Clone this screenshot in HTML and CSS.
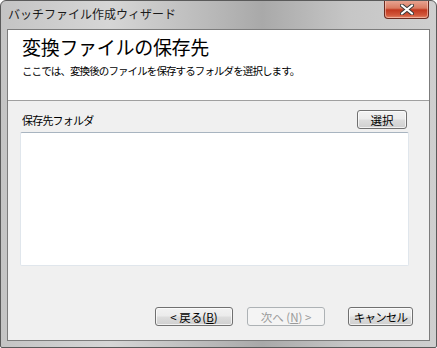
FILE: index.html
```html
<!DOCTYPE html>
<html lang="ja">
<head>
  <meta charset="UTF-8" />
  <title>バッチファイル作成ウィザード</title>
  <link rel="stylesheet" href="styles.css">
</head>
<body>
  <div class="window">
    <div class="titlebar">
      <span class="title">バッチファイル作成ウィザード</span>
      <button class="close" aria-label="閉じる">
        <svg width="14" height="11" viewBox="0 0 14 11">
          <path d="M2 1.5 L12 9.5 M12 1.5 L2 9.5" stroke="#3a3a3a" stroke-width="4" stroke-linecap="round"/>
          <path d="M2 1.5 L12 9.5 M12 1.5 L2 9.5" stroke="#ffffff" stroke-width="2.2" stroke-linecap="round"/>
        </svg>
      </button>
    </div>

    <div class="client">
      <div class="header">
        <h1>変換ファイルの保存先</h1>
        <p>ここでは、変換後のファイルを保存するフォルダを選択します。</p>
      </div>

      <div class="content">
        <div class="folder-row">
          <label for="folder">保存先フォルダ</label>
          <button class="btn btn-select">選択</button>
        </div>
        <textarea id="folder"></textarea>

        <div class="buttons">
          <button class="btn btn-nav">&lt; 戻る(<u>B</u>)</button>
          <button class="btn btn-nav" disabled>次へ (<u>N</u>) &gt;</button>
          <button class="btn btn-cancel">キャンセル</button>
        </div>
      </div>
    </div>
  </div>
</body>
</html>
```

FILE: styles.css
```css
html, body {
  margin: 0;
  padding: 0;
  background: #ffffff;
}
body {
  font-family: "Noto Sans CJK JP", "Noto Sans", sans-serif;
  font-size: 12px;
  color: #000;
}
.window {
  box-sizing: border-box;
  width: 437px;
  height: 348px;
  border: 1px solid #5a5a5a;
  border-radius: 6px 6px 2px 2px;
  padding: 0 6px 6px 6px;
  background: linear-gradient(to right, #c4c4c4 0%, #d6d6d6 25%, #bdbdbd 45%, #a9a9a9 60%, #c6c6c6 80%, #cfcfcf 100%);
  display: flex;
  flex-direction: column;
  overflow: hidden;
}
.titlebar {
  height: 28px;
  display: flex;
  align-items: flex-start;
  justify-content: space-between;
  flex-shrink: 0;
}
.title {
  margin: 5px 0 0 1px;
  font-size: 12px;
  line-height: 16px;
  color: #1a1a1a;
}
.close {
  width: 45px;
  height: 19px;
  margin-top: -1px;
  margin-right: 1px;
  padding: 0;
  border: 1px solid #6b2b20;
  border-top: none;
  border-radius: 0 0 4px 4px;
  background: linear-gradient(to bottom, #e9a897 0%, #da7c62 45%, #c1381f 55%, #d2583c 85%, #e38a6c 100%);
  box-shadow: inset 0 0 0 1px rgba(255, 220, 210, 0.5);
  display: flex;
  align-items: center;
  justify-content: center;
}
.client {
  flex: 1;
  border: 1px solid #7c7c7c;
  background: #f0f0f0;
  display: flex;
  flex-direction: column;
}
.header {
  height: 71px;
  background: #ffffff;
  border-bottom: 1px solid #a0a0a0;
  padding: 4px 14px 0 14px;
  box-sizing: border-box;
  flex-shrink: 0;
}
.header h1 {
  margin: 0;
  font-size: 19px;
  font-weight: normal;
  line-height: 26px;
  letter-spacing: -0.3px;
}
.header p {
  margin: 3px 0 0 0;
  font-size: 10.5px;
  line-height: 16px;
  letter-spacing: -0.9px;
}
.content {
  flex: 1;
  padding: 9px 20px 14px 12px;
  display: flex;
  flex-direction: column;
}
.folder-row {
  display: flex;
  align-items: center;
  justify-content: space-between;
  padding-left: 2px;
}
.folder-row label {
  font-size: 11px;
  letter-spacing: -0.8px;
}
textarea {
  margin-top: 3px;
  height: 134px;
  box-sizing: border-box;
  border: 1px solid #e0e6ec;
  border-top-color: #a8b4c0;
  border-radius: 2px;
  background: #ffffff;
  resize: none;
  width: 389px;
}
.btn {
  box-sizing: border-box;
  height: 19px;
  padding: 0;
  font-family: inherit;
  font-size: 11.5px;
  line-height: 16px;
  color: #000;
  border: 1px solid #707070;
  border-radius: 3px;
  background: linear-gradient(to bottom, #f2f2f2 0%, #ebebeb 48%, #dddddd 52%, #cfcfcf 100%);
  box-shadow: inset 0 0 0 1px rgba(255, 255, 255, 0.7);
}
.btn-select {
  width: 50px;
  margin-right: 2px;
}
.buttons {
  margin-top: auto;
  display: flex;
  justify-content: flex-end;
  gap: 14px;
  margin-right: -4px;
}
.btn-nav {
  width: 78px;
}
.btn-nav:disabled {
  color: #9a9a9a;
  border-color: #adb2b5;
  background: #f4f4f4;
  box-shadow: none;
}
.btn-cancel {
  width: 65px;
  margin-left: 9px;
  letter-spacing: -0.8px;
}
```
